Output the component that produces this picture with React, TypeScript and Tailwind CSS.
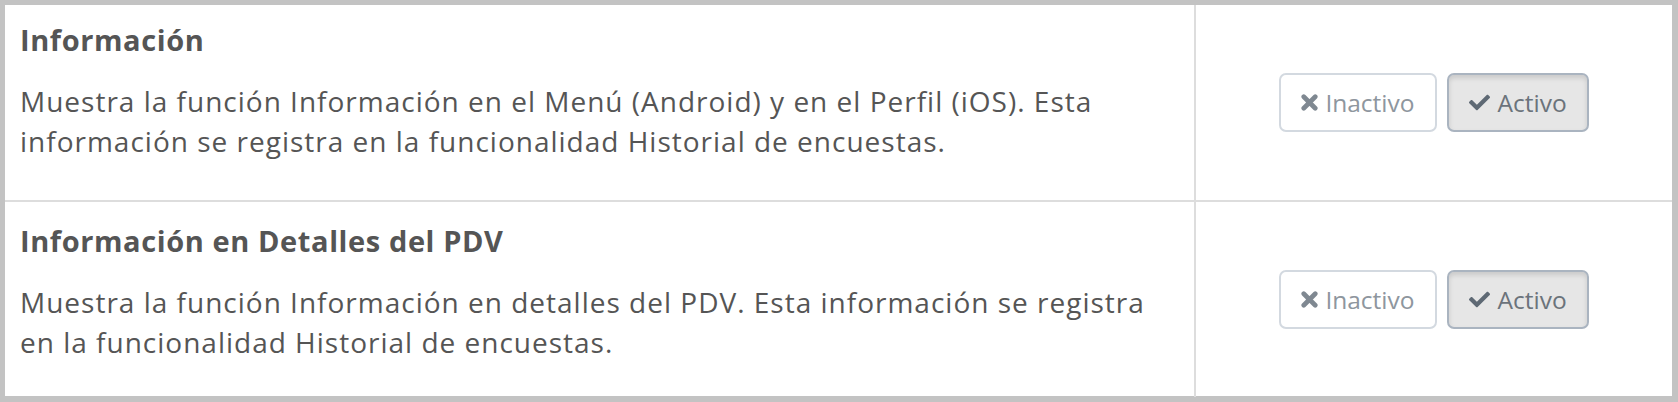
import { FaCheck } from 'react-icons/fa';

type Setting = {
  title: string;
  description: string;
  active: boolean;
};

const settings: Setting[] = [
  {
    title: 'Información',
    description:
      'Muestra la función Información en el Menú (Android) y en el Perfil (iOS). Esta información se registra en la funcionalidad Historial de encuestas.',
    active: true,
  },
  {
    title: 'Información en Detalles del PDV',
    description:
      'Muestra la función Información en detalles del PDV. Esta información se registra en la funcionalidad Historial de encuestas.',
    active: true,
  },
];

// chunky "times" glyph, drawn with rounded strokes
function TimesIcon({ className }: { className?: string }) {
  return (
    <svg viewBox="0 0 16 16" className={className} fill="none" stroke="currentColor">
      <path d="M2.6 2.6 L13.4 13.4 M13.4 2.6 L2.6 13.4" strokeWidth="4.4" strokeLinecap="round" />
    </svg>
  );
}

const onCls =
  'border-[#aab4c0] bg-[#e6e6e6] text-[#6b737b] shadow-[inset_0_3px_5px_rgba(0,0,0,0.125)]';
const offCls = 'border-[#d3d9e0] bg-white text-[#8e969e]';

function Toggle({ active }: { active: boolean }) {
  return (
    <div className="flex items-center gap-[10px]">
      <button
        className={`flex items-center rounded-[7px] border-2 px-[20px] py-[10px] text-[24.5px] leading-[35px] ${
          !active ? onCls : offCls
        }`}
      >
        <TimesIcon className="mr-[7px] h-[17px] w-[17px] text-[#7f8891]" />
        Inactivo
      </button>
      <button
        className={`flex items-center rounded-[7px] border-2 px-[20px] py-[10px] text-[24.5px] leading-[35px] ${
          active ? onCls : offCls
        }`}
      >
        <FaCheck className="mr-[8px] h-[21px] w-[21px] text-[#5e6974]" />
        Activo
      </button>
    </div>
  );
}

export default function App() {
  return (
    <div
      className="h-[402px] w-[1678px] bg-[#c3c3c3] pb-[6px] pl-[5px] pr-[6px] pt-[5px]"
      style={{ fontFamily: '"Open Sans", sans-serif' }}
    >
      <div className="h-full bg-white">
        {settings.map((s, i) => (
          <div
            key={s.title}
            className={`flex ${i < settings.length - 1 ? 'border-b-2 border-[#dddddd]' : ''}`}
          >
            <div
              className={`w-[1189px] shrink-0 pl-[15px] pr-[14px] text-[#555555] ${
                i === 0 ? 'pb-[39px] pt-[15px]' : 'pb-[35px] pt-[19px]'
              }`}
            >
              <div className="text-[29px] font-bold leading-[40px] tracking-[0.6px]">{s.title}</div>
              <p className="mt-[21px] text-[28px] leading-[40px] tracking-[1px]">{s.description}</p>
            </div>
            <div className="flex flex-1 items-center justify-center border-l-2 border-[#dddddd]">
              <Toggle active={s.active} />
            </div>
          </div>
        ))}
      </div>
    </div>
  );
}
